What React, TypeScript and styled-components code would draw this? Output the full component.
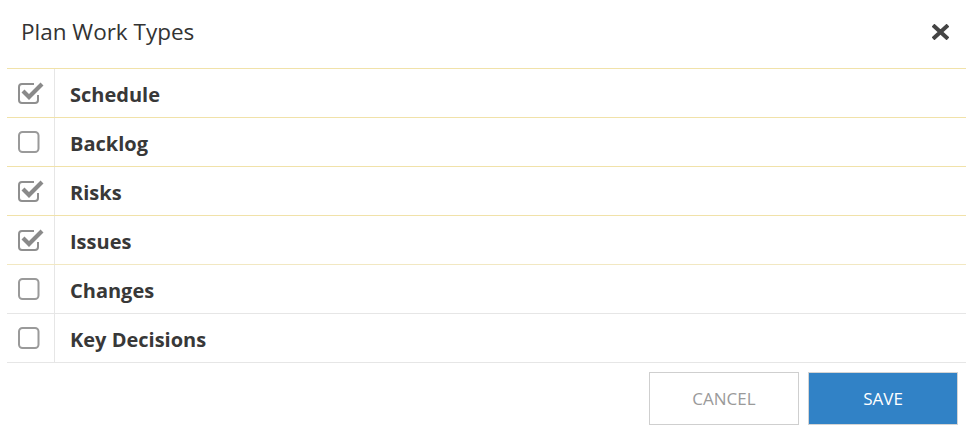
import React from "react";
import styled, { createGlobalStyle } from "styled-components";

const Global = createGlobalStyle`
  html, body { margin: 0; padding: 0; background: #fff; }
  body { font-family: "Open Sans", "Liberation Sans", sans-serif; }
`;

const Dialog = styled.div`
  width: 972px;
  height: 433px;
  box-sizing: border-box;
  padding: 0 6px 0 7px;
  display: flex;
  flex-direction: column;
`;

const Header = styled.div`
  height: 68px;
  display: flex;
  align-items: center;
  justify-content: space-between;
  padding: 0 17px 5px 14px;
  box-sizing: border-box;
`;

const Title = styled.h1`
  margin: 0;
  font-size: 22.5px;
  font-weight: 400;
  color: #333;
`;

const CloseButton = styled.button`
  border: none;
  background: none;
  padding: 0;
  width: 17px;
  height: 17px;
  display: flex;
  align-items: center;
  justify-content: center;
  cursor: pointer;
`;

const Table = styled.div`
  display: flex;
  flex-direction: column;
`;

const Row = styled.div<{ $line: string }>`
  display: grid;
  grid-template-columns: 48px 1fr;
  height: 49px;
  border-top: 1px solid ${(p) => p.$line};
  box-sizing: border-box;
  &:last-child {
    height: 50px;
    border-bottom: 1px solid #e6e6e6;
  }
`;

const CheckCell = styled.div`
  display: flex;
  align-items: center;
  padding-left: 11px;
  border-right: 1px solid #e6e6e6;
`;

const LabelCell = styled.div`
  display: flex;
  align-items: center;
  padding: 3px 0 0 15px;
  font-size: 20px;
  font-weight: 700;
  color: #383838;
`;

const Footer = styled.div`
  display: flex;
  justify-content: flex-end;
  gap: 9px;
  padding: 9px 8px 0 0;
`;

const Button = styled.button<{ $primary?: boolean }>`
  width: 150px;
  height: 53px;
  box-sizing: border-box;
  font-family: "Open Sans", "Liberation Sans", sans-serif;
  font-size: 17px;
  font-weight: 400;
  border: 1px solid ${(p) => (p.$primary ? "#d4d4d4" : "#cfcfcf")};
  background: ${(p) => (p.$primary ? "#3182c6" : "#fff")};
  color: ${(p) => (p.$primary ? "#fff" : "#9a9a9a")};
  cursor: pointer;
`;

const CheckedIcon = () => (
  <svg width="26" height="22" viewBox="0 0 26 22" fill="none">
    <path
      d="M16 2 H4 A3 3 0 0 0 1 5 V18 A3 3 0 0 0 4 21 H17 A3 3 0 0 0 20 18 V13"
      stroke="#8f8f8f"
      strokeWidth="2"
    />
    <path d="M5 9 L11 15 L24 2" stroke="#8a8a8a" strokeWidth="4.2" strokeLinejoin="miter" />
  </svg>
);

const UncheckedIcon = () => (
  <svg width="26" height="22" viewBox="0 0 26 22" fill="none">
    <rect x="1" y="1" width="19.5" height="20" rx="3.5" stroke="#9a9a9a" strokeWidth="2" />
  </svg>
);

const CloseIcon = () => (
  <svg width="17" height="16" viewBox="0 0 17 16">
    <path d="M2.5 2.5 L14.5 13.5 M14.5 2.5 L2.5 13.5" stroke="#444" strokeWidth="4" strokeLinecap="square" />
  </svg>
);

const items = [
  { label: "Schedule", checked: true, line: "#f1e2a9" },
  { label: "Backlog", checked: false, line: "#f1e2a9" },
  { label: "Risks", checked: true, line: "#f1e2a9" },
  { label: "Issues", checked: true, line: "#f1e2a9" },
  { label: "Changes", checked: false, line: "#f2e8c2" },
  { label: "Key Decisions", checked: false, line: "#e6e6e6" },
];

export default function App() {
  return (
    <>
      <Global />
      <Dialog>
        <Header>
          <Title>Plan Work Types</Title>
          <CloseButton aria-label="Close">
            <CloseIcon />
          </CloseButton>
        </Header>
        <Table>
          {items.map((it) => (
            <Row key={it.label} $line={it.line}>
              <CheckCell>{it.checked ? <CheckedIcon /> : <UncheckedIcon />}</CheckCell>
              <LabelCell>{it.label}</LabelCell>
            </Row>
          ))}
        </Table>
        <Footer>
          <Button>CANCEL</Button>
          <Button $primary>SAVE</Button>
        </Footer>
      </Dialog>
    </>
  );
}
